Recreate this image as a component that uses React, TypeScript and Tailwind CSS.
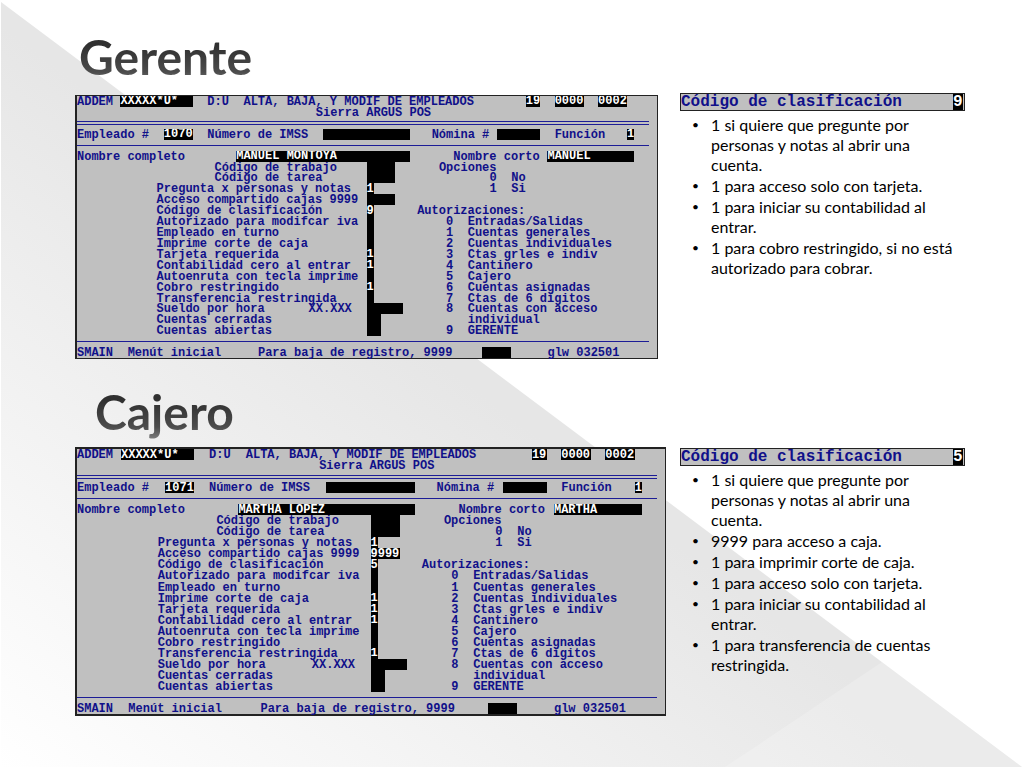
import clsx from "clsx";

type Label = { row: number; col: number; text: string; field?: string };
type Field = { id: string; row: number; col: number; span: number; name?: string };
type Values = Record<string, string>;

const COLS = 80;

const labels: Label[] = [
  { row: 1, col: 0, text: "ADDEM", field: "program" },
  { row: 1, col: 18, text: "D:U" },
  { row: 1, col: 23, text: "ALTA, BAJA, Y MODIF DE EMPLEADOS" },
  { row: 2, col: 33, text: "Sierra ARGUS POS" },
  { row: 4, col: 0, text: "Empleado #", field: "employee" },
  { row: 4, col: 18, text: "Número de IMSS", field: "imss" },
  { row: 4, col: 49, text: "Nómina #", field: "payroll" },
  { row: 4, col: 66, text: "Función", field: "role" },
  { row: 6, col: 0, text: "Nombre completo", field: "fullName" },
  { row: 6, col: 52, text: "Nombre corto", field: "shortName" },
  { row: 7, col: 19, text: "Código de trabajo", field: "job" },
  { row: 8, col: 19, text: "Código de tarea", field: "task" },
  { row: 9, col: 11, text: "Pregunta x personas y notas", field: "ask" },
  { row: 10, col: 11, text: "Acceso compartido cajas 9999", field: "shared" },
  { row: 11, col: 11, text: "Código de clasificación", field: "classCode" },
  { row: 12, col: 11, text: "Autorizado para modifcar iva", field: "tax" },
  { row: 13, col: 11, text: "Empleado en turno", field: "shift" },
  { row: 14, col: 11, text: "Imprime corte de caja", field: "print" },
  { row: 15, col: 11, text: "Tarjeta requerida", field: "card" },
  { row: 16, col: 11, text: "Contabilidad cero al entrar", field: "zero" },
  { row: 17, col: 11, text: "Autoenruta con tecla imprime", field: "route" },
  { row: 18, col: 11, text: "Cobro restringido", field: "charge" },
  { row: 19, col: 11, text: "Transferencia restringida", field: "transfer" },
  { row: 20, col: 11, text: "Sueldo por hora", field: "wage" },
  { row: 20, col: 32, text: "XX.XXX" },
  { row: 21, col: 11, text: "Cuentas cerradas", field: "closed" },
  { row: 22, col: 11, text: "Cuentas abiertas", field: "open" },
  { row: 7, col: 50, text: "Opciones" },
  { row: 8, col: 57, text: "0" },
  { row: 8, col: 60, text: "No" },
  { row: 9, col: 57, text: "1" },
  { row: 9, col: 60, text: "Si" },
  { row: 11, col: 47, text: "Autorizaciones:" },
  { row: 12, col: 51, text: "0" },
  { row: 12, col: 54, text: "Entradas/Salidas" },
  { row: 13, col: 51, text: "1" },
  { row: 13, col: 54, text: "Cuentas generales" },
  { row: 14, col: 51, text: "2" },
  { row: 14, col: 54, text: "Cuentas individuales" },
  { row: 15, col: 51, text: "3" },
  { row: 15, col: 54, text: "Ctas grles e indiv" },
  { row: 16, col: 51, text: "4" },
  { row: 16, col: 54, text: "Cantinero" },
  { row: 17, col: 51, text: "5" },
  { row: 17, col: 54, text: "Cajero" },
  { row: 18, col: 51, text: "6" },
  { row: 18, col: 54, text: "Cuentas asignadas" },
  { row: 19, col: 51, text: "7" },
  { row: 19, col: 54, text: "Ctas de 6 dígitos" },
  { row: 20, col: 51, text: "8" },
  { row: 20, col: 54, text: "Cuentas con acceso" },
  { row: 21, col: 54, text: "individual" },
  { row: 22, col: 51, text: "9" },
  { row: 22, col: 54, text: "GERENTE" },
  { row: 24, col: 0, text: "SMAIN" },
  { row: 24, col: 7, text: "Menút inicial" },
  { row: 24, col: 25, text: "Para baja de registro, 9999", field: "remove" },
  { row: 24, col: 65, text: "glw 032501" },
];

const fields: Field[] = [
  { id: "program", row: 1, col: 6, span: 10 },
  { id: "store", row: 1, col: 62, span: 2, name: "Tienda" },
  { id: "from", row: 1, col: 66, span: 4, name: "Desde" },
  { id: "to", row: 1, col: 72, span: 4, name: "Hasta" },
  { id: "employee", row: 4, col: 12, span: 4 },
  { id: "imss", row: 4, col: 34, span: 12 },
  { id: "payroll", row: 4, col: 58, span: 6 },
  { id: "role", row: 4, col: 76, span: 1 },
  { id: "fullName", row: 6, col: 22, span: 24 },
  { id: "shortName", row: 6, col: 65, span: 12 },
  { id: "job", row: 7, col: 40, span: 4 },
  { id: "task", row: 8, col: 40, span: 4 },
  { id: "ask", row: 9, col: 40, span: 1 },
  { id: "shared", row: 10, col: 40, span: 4 },
  { id: "classCode", row: 11, col: 40, span: 1 },
  { id: "tax", row: 12, col: 40, span: 1 },
  { id: "shift", row: 13, col: 40, span: 1 },
  { id: "print", row: 14, col: 40, span: 1 },
  { id: "card", row: 15, col: 40, span: 1 },
  { id: "zero", row: 16, col: 40, span: 1 },
  { id: "route", row: 17, col: 40, span: 1 },
  { id: "charge", row: 18, col: 40, span: 1 },
  { id: "transfer", row: 19, col: 40, span: 1 },
  { id: "wage", row: 20, col: 40, span: 5 },
  { id: "closed", row: 21, col: 40, span: 2 },
  { id: "open", row: 22, col: 40, span: 2 },
  { id: "remove", row: 24, col: 56, span: 4 },
];

const common: Values = {
  program: "XXXXX*U*",
  store: "19",
  from: "0000",
  to: "0002",
  role: "1",
  ask: "1",
  card: "1",
  zero: "1",
};

const gerente: Values = {
  ...common,
  employee: "1070",
  fullName: "MANUEL MONTOYA",
  shortName: "MANUEL",
  classCode: "9",
  charge: "1",
};

const cajero: Values = {
  ...common,
  employee: "1071",
  fullName: "MARTHA LOPEZ",
  shortName: "MARTHA",
  shared: "9999",
  classCode: "5",
  print: "1",
  transfer: "1",
};

const gerenteNotes = [
  "1 si quiere que pregunte por personas y notas al abrir una cuenta.",
  "1 para acceso solo con tarjeta.",
  "1 para iniciar su contabilidad al entrar.",
  "1 para cobro restringido, si no está autorizado para cobrar.",
];

const cajeroNotes = [
  "1 si quiere que pregunte por personas y notas al abrir una cuenta.",
  "9999 para acceso a caja.",
  "1 para imprimir corte de caja.",
  "1 para acceso solo con tarjeta.",
  "1 para iniciar su contabilidad al entrar.",
  "1 para transferencia de cuentas restringida.",
];

const mono = "font-['Liberation_Mono',monospace] font-bold";

function Rule({ row, double }: { row: number; double?: boolean }) {
  return (
    <div
      className={clsx(
        "self-center border-[#1c1c96]",
        double ? "h-1 border-y" : "border-t"
      )}
      style={{ gridRow: row, gridColumn: `1 / ${COLS}` }}
    />
  );
}

function Terminal({
  prefix,
  values,
  className,
}: {
  prefix: string;
  values: Values;
  className?: string;
}) {
  return (
    <form
      className={clsx(
        mono,
        "grid grid-cols-[repeat(80,minmax(0,1fr))] grid-rows-[repeat(24,minmax(0,1fr))] border-r border-l-2 border-[#222] bg-[#c0c0c0] pr-px text-[12px] leading-[13px] text-[#10108a]",
        className
      )}
    >
      {labels.map(({ row, col, text, field }) => {
        const style = { gridRow: row, gridColumn: `${col + 1} / span ${text.length}` };
        return field ? (
          <label
            key={`${row}-${col}`}
            htmlFor={`${prefix}-${field}`}
            className="whitespace-pre"
            style={style}
          >
            {text}
          </label>
        ) : (
          <span key={`${row}-${col}`} className="whitespace-pre" style={style}>
            {text}
          </span>
        );
      })}
      {fields.map(({ id, row, col, span, name }) => (
        <input
          key={id}
          id={`${prefix}-${id}`}
          aria-label={name}
          defaultValue={values[id] ?? ""}
          className="h-full w-full min-w-0 bg-black p-0 text-white outline-none"
          style={{ gridRow: row, gridColumn: `${col + 1} / span ${span}` }}
        />
      ))}
      <Rule row={3} double />
      <Rule row={5} />
      <Rule row={23} />
    </form>
  );
}

function Notes({
  id,
  code,
  items,
  className,
}: {
  id: string;
  code: string;
  items: string[];
  className?: string;
}) {
  return (
    <div className={className}>
      <div
        className={clsx(
          mono,
          "flex h-[18px] items-center justify-between border border-[#222] bg-[#c0c0c0] pr-px text-[16px] leading-4 text-[#10108a]"
        )}
      >
        <label htmlFor={id}>Código de clasificación</label>
        <input
          id={id}
          defaultValue={code}
          className="h-full w-[10px] bg-black p-0 text-white outline-none"
        />
      </div>
      <ul className="mt-1 flex flex-col gap-px pr-2 pl-3 text-[16px] leading-5 text-black">
        {items.map((item) => (
          <li key={item} className="flex">
            <span className="w-[19px] shrink-0 text-[12px]">•</span>
            <span>{item}</span>
          </li>
        ))}
      </ul>
    </div>
  );
}

function Title({ children }: { children: string }) {
  return (
    <h1 className="bg-linear-to-b from-[#303030] from-30% via-[#4c4c4c] via-75% to-[#8a8a8a] bg-clip-text text-[48px] leading-[60px] font-bold text-transparent">
      {children}
    </h1>
  );
}

function Backdrop() {
  return (
    <svg
      className="absolute inset-0 h-full w-full"
      viewBox="0 0 1024 768"
      preserveAspectRatio="none"
      aria-hidden="true"
    >
      <defs>
        <linearGradient id="shade" gradientUnits="userSpaceOnUse" x1="0" y1="768" x2="360" y2="300">
          <stop offset="0" stopColor="#ffffff" />
          <stop offset="1" stopColor="#e6e6e6" />
        </linearGradient>
      </defs>
      <path d="M1 2L1022 767H1Z" fill="url(#shade)" />
      <path d="M882 662L1022 767H725Z" fill="#ffffff" fillOpacity="0.2" />
    </svg>
  );
}

export default function App() {
  return (
    <div className="relative min-h-screen bg-white font-[Lato,sans-serif]">
      <Backdrop />
      <main className="relative pt-[27px] pr-[59px] pb-[52px] pl-[75px]">
        <section>
          <div className="pl-1">
            <Title>Gerente</Title>
          </div>
          <div className="mt-[6px] grid grid-cols-[583fr_285fr] items-start gap-x-[22px]">
            <Terminal
              prefix="gerente"
              values={gerente}
              className="mt-[2px] aspect-[583/264] border-y"
            />
            <Notes id="gerente-code" code="9" items={gerenteNotes} />
          </div>
        </section>
        <section className="mt-[23px]">
          <div className="pl-5">
            <Title>Cajero</Title>
          </div>
          <div className="mt-[5px] grid grid-cols-[591fr_285fr] items-start gap-x-[14px]">
            <Terminal prefix="cajero" values={cajero} className="aspect-[591/269] border-y-2" />
            <Notes id="cajero-code" code="5" items={cajeroNotes} className="mt-px" />
          </div>
        </section>
      </main>
    </div>
  );
}
